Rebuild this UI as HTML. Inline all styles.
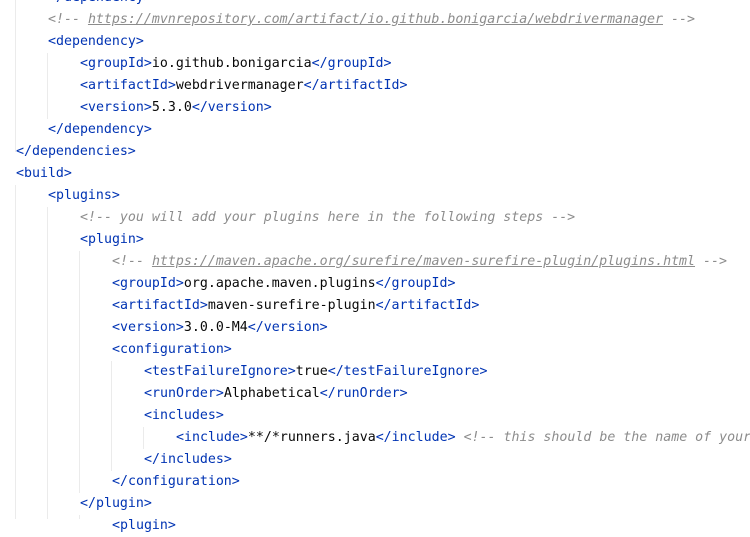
<!DOCTYPE html>
<html><head><meta charset="utf-8"><style>
body{margin:0;width:750px;height:519px;overflow:hidden;background:#fff;position:relative;font-family:"DejaVu Sans Mono","Liberation Mono",monospace;font-size:13.28px;color:#080808}
.l{position:absolute;left:0;height:22px;line-height:22px;white-space:pre}
.t{color:#0033b3}
.c{color:#8c8c8c;font-style:italic}
.u{text-decoration:underline}
.g{position:absolute;width:1px;background:#ebebeb}
</style></head><body>
<div class="g" style="left:15px;top:0;height:152px"></div>
<div class="g" style="left:15px;top:185px;height:334px"></div>
<div class="g" style="left:47px;top:53px;height:66px"></div>
<div class="g" style="left:47px;top:207px;height:312px"></div>
<div class="g" style="left:79px;top:251px;height:242px"></div>
<div class="g" style="left:79px;top:515px;height:4px"></div>
<div class="g" style="left:111px;top:361px;height:110px"></div>
<div class="g" style="left:143px;top:427px;height:22px"></div>
<div class="l" style="top:-13px;left:48px"><span class="t">&lt;/dependency&gt;</span></div>
<div class="l" style="top:9px;left:48px"><span class="c">&lt;!-- <span class="u">https://mvnrepository.com/artifact/io.github.bonigarcia/webdrivermanager</span> --&gt;</span></div>
<div class="l" style="top:31px;left:48px"><span class="t">&lt;dependency&gt;</span></div>
<div class="l" style="top:53px;left:80px"><span class="t">&lt;groupId&gt;</span>io.github.bonigarcia<span class="t">&lt;/groupId&gt;</span></div>
<div class="l" style="top:75px;left:80px"><span class="t">&lt;artifactId&gt;</span>webdrivermanager<span class="t">&lt;/artifactId&gt;</span></div>
<div class="l" style="top:97px;left:80px"><span class="t">&lt;version&gt;</span>5.3.0<span class="t">&lt;/version&gt;</span></div>
<div class="l" style="top:119px;left:48px"><span class="t">&lt;/dependency&gt;</span></div>
<div class="l" style="top:141px;left:16px"><span class="t">&lt;/dependencies&gt;</span></div>
<div class="l" style="top:163px;left:16px"><span class="t">&lt;build&gt;</span></div>
<div class="l" style="top:185px;left:48px"><span class="t">&lt;plugins&gt;</span></div>
<div class="l" style="top:207px;left:80px"><span class="c">&lt;!-- you will add your plugins here in the following steps --&gt;</span></div>
<div class="l" style="top:229px;left:80px"><span class="t">&lt;plugin&gt;</span></div>
<div class="l" style="top:251px;left:112px"><span class="c">&lt;!-- <span class="u">https://maven.apache.org/surefire/maven-surefire-plugin/plugins.html</span> --&gt;</span></div>
<div class="l" style="top:273px;left:112px"><span class="t">&lt;groupId&gt;</span>org.apache.maven.plugins<span class="t">&lt;/groupId&gt;</span></div>
<div class="l" style="top:295px;left:112px"><span class="t">&lt;artifactId&gt;</span>maven-surefire-plugin<span class="t">&lt;/artifactId&gt;</span></div>
<div class="l" style="top:317px;left:112px"><span class="t">&lt;version&gt;</span>3.0.0-M4<span class="t">&lt;/version&gt;</span></div>
<div class="l" style="top:339px;left:112px"><span class="t">&lt;configuration&gt;</span></div>
<div class="l" style="top:361px;left:144px"><span class="t">&lt;testFailureIgnore&gt;</span>true<span class="t">&lt;/testFailureIgnore&gt;</span></div>
<div class="l" style="top:383px;left:144px"><span class="t">&lt;runOrder&gt;</span>Alphabetical<span class="t">&lt;/runOrder&gt;</span></div>
<div class="l" style="top:405px;left:144px"><span class="t">&lt;includes&gt;</span></div>
<div class="l" style="top:427px;left:176px"><span class="t">&lt;include&gt;</span>**/*runners.java<span class="t">&lt;/include&gt;</span> <span class="c">&lt;!-- this should be the name of your</span></div>
<div class="l" style="top:449px;left:144px"><span class="t">&lt;/includes&gt;</span></div>
<div class="l" style="top:471px;left:112px"><span class="t">&lt;/configuration&gt;</span></div>
<div class="l" style="top:493px;left:80px"><span class="t">&lt;/plugin&gt;</span></div>
<div class="l" style="top:515px;left:112px"><span class="t">&lt;plugin&gt;</span></div>
</body></html>
